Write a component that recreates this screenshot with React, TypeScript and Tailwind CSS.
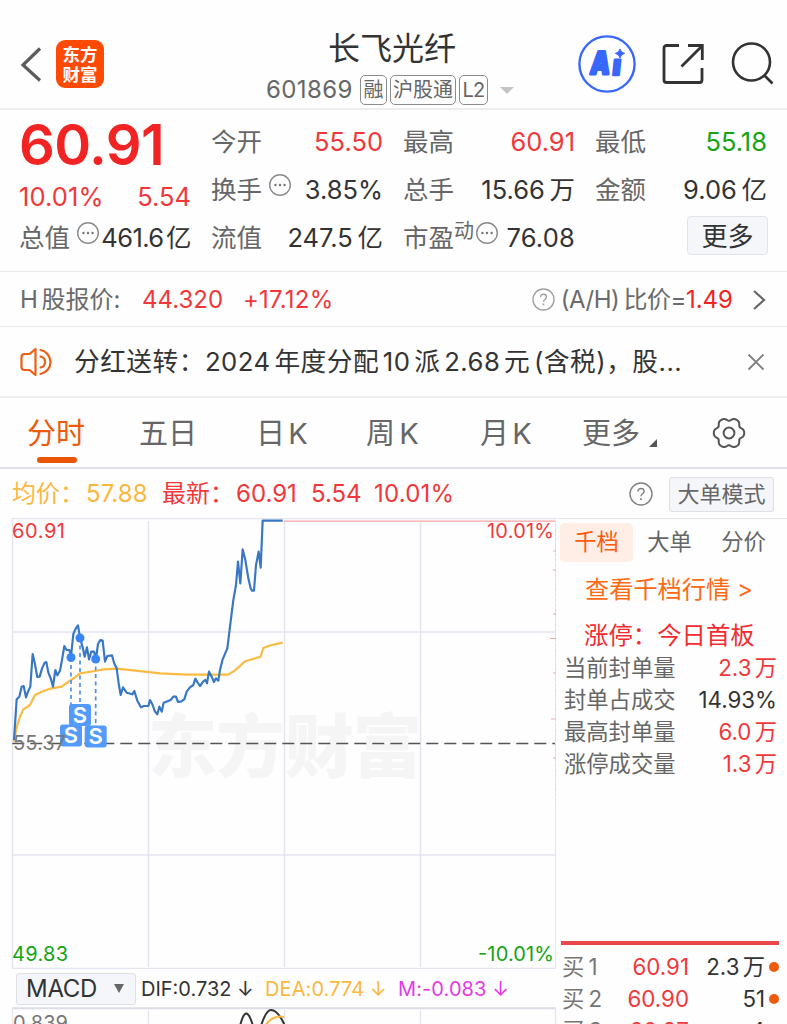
import React from "react";

type Tone = "red" | "green" | "dark";

const tones: Record<Tone, string> = {
    red: "text-[#f0383a]",
    green: "text-[#14a414]",
    dark: "text-[#333333]",
};

const quoteColumns: { label: string; value: string; tone: Tone; hint?: boolean }[][] = [
    [
        { label: "今开", value: "55.50", tone: "red" },
        { label: "换手", value: "3.85%", tone: "dark", hint: true },
        { label: "流值", value: "247.5 亿", tone: "dark" },
    ],
    [
        { label: "最高", value: "60.91", tone: "red" },
        { label: "总手", value: "15.66 万", tone: "dark" },
    ],
    [
        { label: "最低", value: "55.18", tone: "green" },
        { label: "金额", value: "9.06 亿", tone: "dark" },
    ],
];

const limitRows: { label: string; value: string; tone: Tone }[] = [
    { label: "当前封单量", value: "2.3 万", tone: "red" },
    { label: "封单占成交", value: "14.93%", tone: "dark" },
    { label: "最高封单量", value: "6.0 万", tone: "red" },
    { label: "涨停成交量", value: "1.3 万", tone: "red" },
];

const bids = [
    { level: "买 1", price: "60.91", volume: "2.3 万" },
    { level: "买 2", price: "60.90", volume: "51" },
    { level: "买 3", price: "60.87", volume: "4" },
];

// Both series are in thirds of a pixel, measured from y = 510
const pricePoints =
    "42,690 50,568 58,560 65,530 71,528 78,562 84,545 91,530 98,432 104,458 112,501 119,500 126,476 134,458 139,456 145,488 152,505 159,530 166,480 172,496 180,482 186,450 193,408 200,420 208,420 213,440 220,372 227,356 234,346 240,384 248,412 254,440 261,412 267,448 274,425 282,425 288,446 294,402 301,390 308,392 315,455 322,438 336,436 342,458 350,475 356,520 362,555 369,532 380,548 397,553 403,543 412,572 423,592 432,588 445,588 450,570 458,585 464,603 472,613 478,590 485,605 491,578 512,570 520,560 528,560 534,576 544,574 553,568 560,545 570,532 580,525 586,506 593,518 600,528 610,514 616,510 621,520 627,485 635,500 642,516 648,505 655,512 660,480 668,448 682,415 690,350 700,270 708,225 714,155 721,220 728,118 736,150 745,205 752,235 756,242 762,242 768,165 776,125 782,173 788,32 848,32";
const averagePoints =
    "42,695 50,652 60,620 70,598 90,585 105,555 130,543 150,536 185,530 200,519 225,502 240,490 285,483 310,478 350,476 400,481 480,490 560,494 685,494 705,481 735,454 782,440 790,414 815,405 848,398";

const sells = [
    { x: 71, dot: 657.5, top: 724.5 },
    { x: 95.7, dot: 659, top: 725.5 },
    { x: 80, dot: 638, top: 704 },
];

// Six-lobed gear outline around (17, 17)
const gearPoints = Array.from({ length: 120 }, (_, i) => {
    const a = (i * Math.PI) / 60;
    const r = 14 + 1.5 * Math.cos(6 * a) - 0.3 * Math.cos(12 * a);
    return `${(17 + r * Math.cos(a)).toFixed(2)},${(17 + r * Math.sin(a)).toFixed(2)}`;
}).join(" ");

function Dots({ className = "" }: { className?: string }) {
    return (
        <svg viewBox="0 0 24 24" className={`h-6 w-6 shrink-0 ${className}`} fill="none">
            <circle cx="12" cy="12" r="10.3" stroke="#8a8a8a" strokeWidth="1.4" />
            <g fill="#777777">
                <circle cx="7.4" cy="12" r="1.2" />
                <circle cx="12" cy="12" r="1.2" />
                <circle cx="16.6" cy="12" r="1.2" />
            </g>
        </svg>
    );
}

function Question({ className = "" }: { className?: string }) {
    return (
        <svg viewBox="0 0 24 24" className={`shrink-0 ${className}`} fill="none" stroke="currentColor" strokeWidth="1.4">
            <circle cx="12" cy="12" r="11" />
            <path d="M8.9 9.6c0-1.9 1.3-3.1 3.1-3.1s3.1 1.2 3.1 2.9c0 2.3-3.1 2.5-3.1 4.9" />
            <path d="M12 16.2v1.8" strokeWidth="1.7" />
        </svg>
    );
}

function Header() {
    return (
        <header className="flex h-[110px] shrink-0 border-b-2 border-[#ededf0]">
            <div className="flex w-[266px] items-start pl-5 pt-10">
                <svg viewBox="0 0 22 36" className="mt-[7px] h-9 w-[22px]" fill="none" stroke="#5c5c5c" strokeWidth="3.2">
                    <path d="M20 1.5 3 18l17 15.5" />
                </svg>
                <div className="ml-3.5 h-12 w-12 rounded-[9px] bg-[#ff4a05] pt-[5px] text-center text-[17.5px] font-bold leading-[19.5px] text-white">
                    东方
                    <br />
                    财富
                </div>
            </div>
            <div className="w-[252px] pt-[30px]">
                <h1 className="pl-[62px] text-[32px] leading-[38px] text-[#333333]">长飞光纤</h1>
                <div className="mt-[7px] flex items-center text-[#666666]">
                    <span className="w-[94px] text-[24px] leading-[30px] tracking-[0.4px]">601869</span>
                    <span className="h-[30px] w-[27px] rounded-[5px] border-[1.5px] border-[#8c8c8c] text-center text-[20px] leading-[28px]">融</span>
                    <span className="ml-[3px] h-[30px] w-[66px] rounded-[5px] border-[1.5px] border-[#8c8c8c] text-center text-[20px] leading-[28px]">沪股通</span>
                    <span className="ml-[3px] h-[30px] w-[29px] rounded-[5px] border-[1.5px] border-[#8c8c8c] text-center text-[20px] leading-[28px] tracking-[-0.8px]">L2</span>
                    <svg viewBox="0 0 14 7" className="ml-3 h-[7px] w-3.5 shrink-0">
                        <path d="M0 0h14L7 7z" fill="#c4c4c4" />
                    </svg>
                </div>
            </div>
            <div className="flex items-start pl-[60px] pt-[35px]">
                <svg viewBox="0 0 58 58" className="h-[58px] w-[58px]">
                    <circle cx="29" cy="29" r="27.6" fill="none" stroke="#3868fb" strokeWidth="2.4" />
                    <g transform="skewX(-6)" fill="#3868fb" stroke="#3868fb" strokeLinejoin="round">
                        <text x="15.5" y="39" fontSize="31" fontWeight="900" strokeWidth="2.8" textLength="19.5" lengthAdjust="spacingAndGlyphs">A</text>
                        <text x="38" y="40.5" fontSize="28" fontWeight="900" strokeWidth="2.4">ı</text>
                    </g>
                    <path d="M42 14q.8 3.6 4.6 4.4Q42.8 19.2 42 23q-.8-3.8-4.6-4.6Q41.2 17.6 42 14Z" fill="#3868fb" stroke="#3868fb" strokeWidth="1" />
                </svg>
                <svg viewBox="0 0 42 42" className="ml-[26px] mt-2 h-[42px] w-[42px]" fill="none" stroke="#333333" strokeWidth="2.8">
                    <path d="M17 2.5H4.5A2.5 2.5 0 0 0 2 5v32a2.5 2.5 0 0 0 2.5 2.5h33A2.5 2.5 0 0 0 40 37V25" />
                    <path d="M26 2.5h14.3V17M40 3 19.5 23.5" />
                </svg>
                <svg viewBox="0 0 44 44" className="ml-[27px] mt-[7px] h-11 w-11" fill="none" stroke="#333333" strokeWidth="2.6">
                    <circle cx="20.5" cy="20" r="18.5" />
                    <path d="m33.5 33.5 8 8" />
                </svg>
            </div>
        </header>
    );
}

function Quote() {
    return (
        <section className="grid h-[162px] shrink-0 grid-cols-[172px_172px_172px_172px] gap-x-5 border-b border-[#e9e9ec] pl-[19px] pt-2 text-[25.5px] leading-[47px] text-[#666666]">
            <div>
                <div className="h-[55px] text-[56px] font-semibold leading-[54px] tracking-[-0.6px] text-[#f22323]">60.91</div>
                <div className="flex h-[41px] justify-between text-[#f0383a]">
                    <span className="tracking-[0.1px]">10.01%</span>
                    <span>5.54</span>
                </div>
                <div className="flex h-12 justify-between">
                    <span>总值</span>
                    <Dots className="ml-1.5 mt-[7px]" />
                    <span className="flex-1 text-right tracking-[-0.6px] text-[#333333] [word-spacing:-4px]">461.6 亿</span>
                </div>
            </div>
            {quoteColumns.map((column, i) => (
                <div key={i}>
                    {column.map((item) => (
                        <div key={item.label} className="flex h-12">
                            <span>{item.label}</span>
                            {item.hint && <Dots className="ml-1.5 mt-[7px]" />}
                            <span className={`flex-1 text-right [word-spacing:-2.5px] ${tones[item.tone]}`}>{item.value}</span>
                        </div>
                    ))}
                    {i === 1 && (
                        <div className="flex h-12">
                            <span>市盈</span>
                            <span className="w-[21px] text-[20px] leading-[35px]">动</span>
                            <Dots className="mt-[7px]" />
                            <span className="flex-1 text-right tracking-[0.2px] text-[#333333]">76.08</span>
                        </div>
                    )}
                    {i === 2 && (
                        <button className="ml-[92px] mt-0.5 block h-[39px] w-[81px] rounded-[4px] border border-[#e2e3e8] bg-[#f5f6f9] text-[26px] leading-[39px] text-[#333333]">
                            更多
                        </button>
                    )}
                </div>
            ))}
        </section>
    );
}

function HShare() {
    return (
        <section className="flex h-[55px] shrink-0 items-center border-b border-[#e9e9ec] px-5 pt-px text-[24px] text-[#6a6a6a]">
            <span className="w-[122px] [word-spacing:-3px]">H 股报价:</span>
            <span className="w-[101px] text-[#f0383a]">44.320</span>
            <span className="tracking-[0.2px] text-[#f0383a]">+17.12%</span>
            <Question className="ml-auto h-[23px] w-[23px] text-[#a0a0a0]" />
            <span className="ml-1.5 tracking-[-0.5px] [word-spacing:-2px]">(A/H) 比价=</span>
            <span className="text-[#f22323]">1.49</span>
            <svg viewBox="0 0 14 22" className="ml-[19px] mr-px h-[22px] w-3.5" fill="none" stroke="#666666" strokeWidth="2.2">
                <path d="m2 2 10 9L2 20" />
            </svg>
        </section>
    );
}

function Notice() {
    return (
        <section className="flex h-[71px] shrink-0 items-center border-b-2 border-[#ededf0] pl-5 pr-[22px] text-[#333333]">
            <svg viewBox="0 0 36 30" className="h-[30px] w-9 shrink-0" fill="none" stroke="#ec5f17" strokeWidth="2.2" strokeLinejoin="round" strokeLinecap="round">
                <path d="M15.5 2v26l-6-5h-5q-3 0-3-3V10q0-3 3-3h5z" />
                <path d="M20.5 9.5a5.6 5.6 0 0 1 0 11M20.5 3a12.2 12.2 0 0 1 0 24" />
            </svg>
            <span className="ml-[18px] pt-px text-[25.7px] tracking-[0.5px] [word-spacing:-4px]">分红送转：2024 年度分配 10 派 2.68 元 (含税)，股...</span>
            <svg viewBox="0 0 18 18" className="ml-auto h-[18px] w-[18px] shrink-0" stroke="#808080" strokeWidth="1.8">
                <path d="m1.5 1.5 15 15m0-15-15 15" />
            </svg>
        </section>
    );
}

function Tabs() {
    return (
        <nav className="flex h-[71px] shrink-0 border-b-2 border-[#e0e1e8] text-[29px] leading-[71px] text-[#666666]">
            <div className="w-[112px] pl-[27px] text-[#ec5a0c]">
                分时
                <div className="ml-2.5 mt-[-12px] h-1.5 w-10 rounded-full bg-[#ea5504]" />
            </div>
            <span className="w-[112px] pl-[27px]">五日</span>
            <span className="w-[112px] pl-8 [word-spacing:-5px]">日 K</span>
            <span className="w-[112px] pl-[30px] [word-spacing:-4px]">周 K</span>
            <span className="w-[112px] pl-8 [word-spacing:-5px]">月 K</span>
            <div className="flex w-[152px] pl-[22px]">
                更多
                <svg viewBox="0 0 8 8" className="ml-[9px] mt-[41px] h-2 w-2">
                    <path d="M8 0v8H0z" fill="#555555" />
                </svg>
            </div>
            <svg viewBox="0 0 34 34" className="mt-[18px] h-[34px] w-[34px]" fill="none" stroke="#555555" strokeWidth="2" strokeLinejoin="round">
                <polygon points={gearPoints} />
                <circle cx="17" cy="17" r="5.4" />
            </svg>
        </nav>
    );
}

function Summary() {
    return (
        <div className="flex h-[49px] shrink-0 items-center pl-3 pr-[13px] pt-px text-[24px] text-[#f0383a]">
            <span className="w-[74px] text-[#fab83e]">均价：</span>
            <span className="w-[76px] tracking-[0.1px] text-[#fab83e]">57.88</span>
            <span className="w-[74px]">最新：</span>
            <span className="w-[75px]">60.91</span>
            <span className="w-[63px]">5.54</span>
            <span className="tracking-[0.2px]">10.01%</span>
            <Question className="ml-auto h-6 w-6 text-[#808080]" />
            <button className="ml-4 h-[35px] w-[105px] rounded-[3px] border border-[#dfe0e6] bg-[#f5f6f9] text-[22px] leading-[32px] text-[#666666]">
                大单模式
            </button>
        </div>
    );
}

function PriceChart() {
    return (
        <svg viewBox="0 518 557 451" className="block h-[451px] w-[557px]" fill="none">
            <text x="148" y="772" fontSize="69" fontWeight="900" fill="#f5f5f6" textLength="274">东方财富</text>
            <g stroke="#e4e5ef" strokeWidth="1.5">
                <path d="M12.5 969V518.5H556M12 968.5h544M148.500 521v446M284.500 521v446M420.500 521v446M12 632h544M12 855h544" />
                <path d="M555.5 518v451" strokeWidth="1" />
            </g>
            <path d="M284 521.2h271" stroke="#f5a5a5" strokeWidth="1.3" />
            <path d="M555.5 524v280" stroke="#f8c8cc" strokeWidth=".8" strokeDasharray="2 3" />
            <path d="M553 551h3M553 570h3M553 614h3M550 638.5h6M553 673h3M551 719h5M553 758h3" stroke="#f3aaaa" />
            <path d="M12.3 743.5H555" stroke="#555555" strokeWidth="1.7" strokeDasharray="12 6" />
            <g transform="translate(0 510) scale(.33333)" strokeLinejoin="round" strokeWidth="6.5">
                <polyline points={averagePoints} stroke="#f9bb42" />
                <polyline points={pricePoints} stroke="#3877c4" />
            </g>
            {sells.map((s) => (
                <g key={s.x}>
                    <path d={`M${s.x} ${s.dot}V${s.top}`} stroke="#4a90f7" strokeWidth="1.7" strokeDasharray="4 3.5" />
                    <circle cx={s.x} cy={s.dot} r="4.5" fill="#3b86f6" />
                    <rect x={s.x - 11} y={s.top} width="22" height="22" rx="3" fill="#539af9" />
                    <text x={s.x} y={s.top + 18.6} fontSize="22" fontWeight="600" textAnchor="middle" fill="#ffffff">S</text>
                </g>
            ))}
            <g fontSize="20">
                <text x="12" y="538" fill="#f0383a" textLength="53">60.91</text>
                <text x="554" y="538" textAnchor="end" fill="#f0383a" textLength="67">10.01%</text>
                <text x="13" y="750" fill="#777777" textLength="53">55.37</text>
                <text x="12" y="961" fill="#14a414" textLength="56">49.83</text>
                <text x="554" y="961" textAnchor="end" fill="#14a414" textLength="76">-10.01%</text>
            </g>
        </svg>
    );
}

function Macd() {
    return (
        <div>
            <div className="flex h-[38px] items-center pl-4 pt-px text-[20px]">
                <button className="flex h-8 w-[120px] items-center justify-between rounded-[3px] border border-[#dfe0e6] bg-[#f5f6f9] pl-[9px] pr-[11px] text-[24px] text-[#333333]">
                    <span className="tracking-[-0.3px]">MACD</span>
                    <svg viewBox="0 0 10 9" className="h-[9px] w-2.5">
                        <path d="M0 0h10L5 9z" fill="#666666" />
                    </svg>
                </button>
                <span className="ml-[5px] w-[124px] text-[#333333]">DIF:0.732 ↓</span>
                <span className="w-[133px] tracking-[0.1px] text-[#fab83e]">DEA:0.774 ↓</span>
                <span className="tracking-[0.1px] text-[#e23be6]">M:-0.083 ↓</span>
            </div>
            <svg viewBox="0 1007 557 17" className="block h-[17px] w-[557px]" fill="none">
                <path d="M12 1008.2h544" stroke="#dcdde6" strokeWidth="2" />
                <path d="M12.5 1008v16M148.5 1010v14M284.5 1010v14M420.5 1010v14M555.5 1008v16" stroke="#e4e5ef" strokeWidth="1.3" />
                <path d="M240 1026q6-25 13 0M261 1026q5-16 10-16 7 0 14 16" stroke="#333333" strokeWidth="2" />
                <path d="M265 1026q8-12 19-9" stroke="#f9bb42" strokeWidth="2" />
                <text x="13" y="1030" fontSize="20" fill="#777777" textLength="55">0.839</text>
            </svg>
        </div>
    );
}

function OrderPanel() {
    return (
        <aside className="flex w-[230px] flex-col border-t border-[#e4e5ef] pl-[3px] text-[22.3px]">
            <div className="flex pt-1 text-[#666666]">
                <span className="h-[39px] w-[73px] rounded-[5px] bg-[#ffeee6] text-center leading-[38px] text-[#ff5a0a]">千档</span>
                <span className="w-[73px] text-center leading-[38px]">大单</span>
                <span className="w-[75px] text-center leading-[38px]">分价</span>
            </div>
            <div className="mt-2.5 h-9 pl-[25px] text-[24.2px] leading-[36px] text-[#ff6a13]">查看千档行情 &gt;</div>
            <div className="mt-2 h-9 pl-6 text-[24.4px] leading-[38px] text-[#f22c30]">涨停：今日首板</div>
            <div className="-mt-0.5 pr-2.5">
                {limitRows.map((row) => (
                    <div key={row.label} className="flex h-8 justify-between pl-1 leading-[35px] text-[#666666]">
                        <span>{row.label}</span>
                        <span className={`[word-spacing:-3px] ${tones[row.tone]}`}>{row.value}</span>
                    </div>
                ))}
            </div>
            <div className="ml-px mt-[163px] h-1 w-[218px] shrink-0 bg-[#e9484a]" />
            <div className="mt-1.5">
                {bids.map((bid) => (
                    <div key={bid.level} className="flex h-8 items-center pl-0.5 pr-2 leading-8">
                        <span className="w-[57px] text-[#777777] [word-spacing:-2px]">{bid.level}</span>
                        <span className="w-[70px] text-right text-[#f0383a]">{bid.price}</span>
                        <span className="flex-1 text-right text-[#333333] [word-spacing:-3px]">{bid.volume}</span>
                        <span className="ml-1 h-2.5 w-2.5 rounded-full bg-[#ec5a0c]" />
                    </div>
                ))}
            </div>
        </aside>
    );
}

export default function App() {
    return (
        <div className="flex h-[1024px] w-[787px] flex-col overflow-hidden whitespace-nowrap bg-[#fefefe] font-['Inter','Noto_Sans_CJK_SC',sans-serif]">
            <Header />
            <Quote />
            <HShare />
            <Notice />
            <Tabs />
            <Summary />
            <main className="flex h-[506px] shrink-0 overflow-hidden">
                <div className="w-[557px] shrink-0">
                    <PriceChart />
                    <Macd />
                </div>
                <OrderPanel />
            </main>
        </div>
    );
}
